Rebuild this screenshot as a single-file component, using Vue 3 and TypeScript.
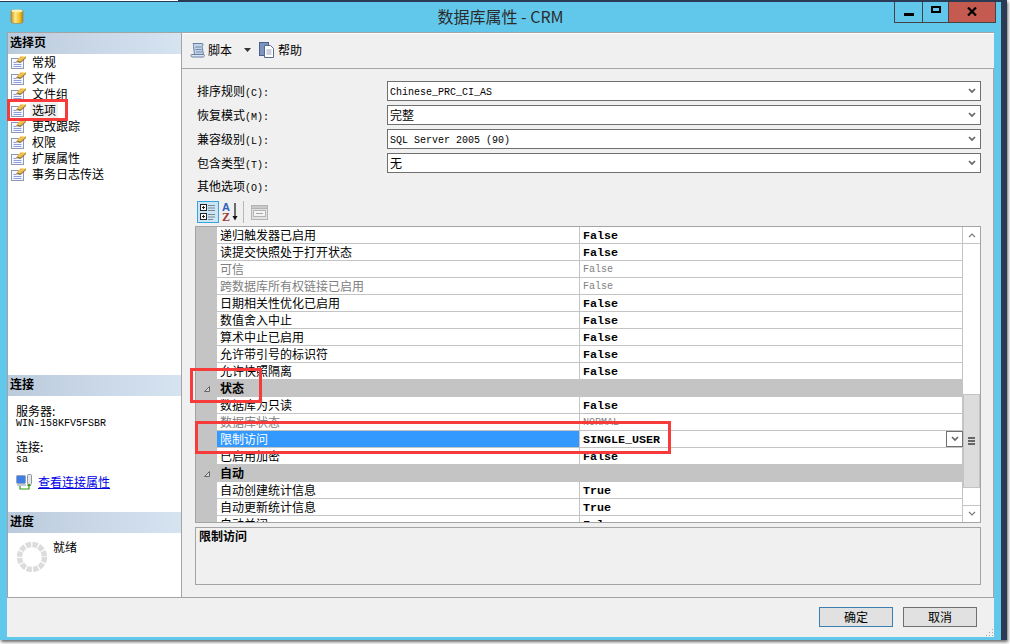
<template>
  <div class="desk">
    <div class="window">
      <div class="topline"><div class="topline-left"></div><div class="topline-right"></div></div>
      <div class="titlebar">
        <svg class="db-icon" width="14" height="17" viewBox="0 0 14 17">
          <defs>
            <linearGradient id="cyl" x1="0" x2="1" y1="0" y2="0">
              <stop offset="0" stop-color="#c98f10" />
              <stop offset="0.35" stop-color="#ffe98a" />
              <stop offset="0.75" stop-color="#f3bb1e" />
              <stop offset="1" stop-color="#b57f10" />
            </linearGradient>
          </defs>
          <path d="M1 3c0-1.5 12-1.5 12 0v11c0 2-12 2-12 0z" fill="url(#cyl)" stroke="#9a8450" stroke-width="0.7" />
          <ellipse cx="7" cy="3" rx="5.5" ry="1.4" fill="#fff3b8" />
        </svg>
        <div class="title">数据库属性 - CRM</div>
        <div class="win-btns">
          <div class="win-btn min"><i></i></div>
          <div class="win-btn max"><i></i></div>
          <div class="win-btn close">
            <svg width="10" height="9" viewBox="0 0 10 9"><path d="M1 .5l8 8M9 .5l-8 8" stroke="#000" stroke-width="2.2" fill="none" /></svg>
          </div>
        </div>
      </div>

      <div class="content">
        <div class="main">
          <aside class="sidebar">
            <div class="side-head">选择页</div>
            <ul class="pages">
              <li v-for="p in pages" :key="p" class="page-row">
                <svg width="16" height="16" viewBox="0 0 16 16">
                  <rect x="0.500" y="4.500" width="12" height="10" fill="#f6f8ff" stroke="#8b97b5" />
                  <path d="M2.500 8.500h3M2.500 10.500h8M2.500 12.500h8" stroke="#8d9ee0" stroke-width="1" />
                  <path d="M5 8l5-5.500h5v1.500L9.500 9z" fill="#8a7440" />
                  <path d="M5.500 6.500L10 2h5v1l-5.500 4.500z" fill="#f0bf4c" />
                  <path d="M10.500 2.600h4" stroke="#fff2b0" stroke-width="0.8" />
                </svg>
                <span :class="{ 'page-sel': p === '选项' }">{{ p }}</span>
              </li>
            </ul>
            <div class="side-fill"></div>
            <div class="side-head">连接</div>
            <div class="conn">
              <div class="zh">服务器:</div>
              <div class="mono server">WIN-158KFV5FSBR</div>
              <div class="zh conn-label">连接:</div>
              <div class="mono server">sa</div>
              <div class="conn-link">
                <svg width="17" height="16" viewBox="0 0 17 16">
                  <rect x="0.500" y="1.500" width="9" height="8" rx="1" fill="#3e7ee8" stroke="#9aa3b5" />
                  <rect x="1" y="10" width="9" height="2" fill="#c3c8d2" />
                  <rect x="11.500" y="0.500" width="4" height="10" rx="1" fill="#e4e6ea" stroke="#8f95a2" />
                  <path d="M4 12v3h9v-4" fill="none" stroke="#2f9a12" stroke-width="1.2" />
                  <path d="M10.800 12l2.200-2.500 2.200 2.500z" fill="#2f9a12" />
                </svg>
                <a class="link">查看连接属性</a>
              </div>
            </div>
            <div class="side-head">进度</div>
            <div class="progress">
              <svg width="30" height="30" viewBox="0 0 30 30">
                <circle cx="15" cy="15" r="12.5" fill="none" stroke="#dcdcdc" stroke-width="5.4" stroke-dasharray="5.3 1.25" />
              </svg>
              <span class="zh">就绪</span>
            </div>
          </aside>

          <section class="panel">
            <div class="toolbar">
              <svg width="16" height="16" viewBox="0 0 16 16">
                <path d="M3 1.500H12c1.500 0 1.500 2 0 2.500l1.500 8.500H4.500L3.500 4.500C3.500 3 3.500 2 3 1.500z" fill="#c3d4ea" stroke="#5c7696" stroke-width="0.9" />
                <path d="M1.500 12.500h12c1.500 0 1 2.500-.5 2.500H2.500C.5 15 .5 12.500 1.500 12.500z" fill="#dbe6f4" stroke="#5c7696" stroke-width="0.9" />
                <path d="M5 5h6M5.500 7.500h6M6 10h6" stroke="#5c7696" stroke-width="0.8" />
              </svg>
              <span class="tool-text">脚本</span>
              <svg class="tool-arrow" width="7" height="4" viewBox="0 0 7 4"><path d="M0 0h7L3.500 4z" fill="#333" /></svg>
              <svg width="16" height="16" viewBox="0 0 16 16">
                <rect x="0.500" y="0.500" width="9" height="13" fill="#7d93c0" stroke="#4a5f8c" />
                <path d="M5.500 3.500h6l3 3v9h-9z" fill="#fff" stroke="#596a8c" />
                <path d="M7.500 8h5M7.500 10h5M7.500 12h5" stroke="#8e9ab5" stroke-width="0.9" />
              </svg>
              <span class="tool-text help-text">帮助</span>
            </div>

            <div class="form">
              <div v-for="f in fields" :key="f.zh" class="field">
                <label class="field-label">
                  <span class="zh">{{ f.zh }}</span><span class="mono">{{ f.key }}</span>
                </label>
                <div class="select">
                  <span :class="f.mono ? 'mono' : 'zh'">{{ f.value }}</span>
                  <svg width="8" height="6" viewBox="0 0 8 6"><path d="M1 1l3 3 3-3" fill="none" stroke="#666" stroke-width="1.700" /></svg>
                </div>
              </div>
              <div class="other"><span class="zh">其他选项</span><span class="mono">(O):</span></div>

              <div class="grid-tools">
                <div class="grid-tool active">
                  <svg width="18" height="18" viewBox="0 0 18 18">
                    <rect x="1.500" y="1.500" width="6" height="6" fill="#fff" stroke="#222" />
                    <path d="M3 4.500h3M4.500 3v3" stroke="#222" />
                    <rect x="1.500" y="10.500" width="6" height="6" fill="#fff" stroke="#222" />
                    <path d="M3 13.500h3M4.500 12v3" stroke="#222" />
                    <path d="M9 2.500h7M9 5h7M9 7.500h7M9 11.500h7M9 14h7M9 16.500h5" stroke="#7d8794" />
                  </svg>
                </div>
                <div class="grid-tool az">
                  <svg width="17" height="20" viewBox="0 0 17 20">
                    <text x="0" y="9" class="az-a">A</text>
                    <text x="0" y="19" class="az-z">Z</text>
                    <path d="M13 1v15" stroke="#111" stroke-width="1.200" />
                    <path d="M10.500 14h5L13 18.500z" fill="#111" />
                  </svg>
                </div>
                <div class="tool-sep"></div>
                <div class="grid-tool">
                  <svg width="17" height="16" viewBox="0 0 17 16">
                    <rect x="0.500" y="1.500" width="16" height="14" fill="#e2e2e2" stroke="#b4b4b4" />
                    <rect x="0.500" y="1.500" width="16" height="3" fill="#c9c9c9" stroke="#b4b4b4" />
                    <rect x="2.500" y="6.500" width="12" height="6" fill="#f4f4f4" stroke="#b4b4b4" />
                    <path d="M5 9.500h7" stroke="#a8a8a8" />
                  </svg>
                </div>
              </div>

              <div class="grid">
                <div class="rows">
                  <div v-for="r in rows" :key="r.name" class="row" :class="r.kind">
                    <div class="gutter">
                      <svg v-if="r.kind === 'cat'" width="6" height="6" viewBox="0 0 6 6"><path d="M5.500 .5v5H.5z" fill="#d8d8d8" stroke="#666" /></svg>
                    </div>
                    <div class="name">{{ r.name }}</div>
                    <div v-if="r.kind !== 'cat'" class="value">
                      <span>{{ r.value }}</span>
                      <div v-if="r.kind === 'sel'" class="drop">
                        <svg width="8" height="6" viewBox="0 0 8 6"><path d="M1 1l3 3 3-3" fill="none" stroke="#666" stroke-width="1.700" /></svg>
                      </div>
                    </div>
                  </div>
                </div>
                <div class="scrollbar">
                  <div class="sb-btn">
                    <svg width="8" height="5" viewBox="0 0 8 5"><path d="M1 4l3-3 3 3" fill="none" stroke="#777" stroke-width="1.100" /></svg>
                  </div>
                  <div class="sb-thumb"><i></i><i></i><i></i></div>
                  <div class="sb-btn down">
                    <svg width="8" height="5" viewBox="0 0 8 5"><path d="M1 1l3 3 3-3" fill="none" stroke="#777" stroke-width="1.100" /></svg>
                  </div>
                </div>
              </div>

              <div class="desc"><b class="zh">限制访问</b></div>
            </div>
          </section>
        </div>

        <div class="footer">
          <button class="btn primary">确定</button>
          <button class="btn">取消</button>
          <svg class="grip" width="9" height="9" viewBox="0 0 9 9">
            <path d="M7 1h1v1H7zM4 4h1v1H4zM7 4h1v1H7zM1 7h1v1H1zM4 7h1v1H4zM7 7h1v1H7z" fill="#a8a8a8" />
          </svg>
        </div>
      </div>
    </div>

    <!-- 红色标注框 -->
    <div class="mark mark-page"></div>
    <div class="mark mark-cat"></div>
    <div class="mark mark-row"></div>
  </div>
</template>

<script setup lang="ts">
type RowKind = "normal" | "gray" | "cat" | "sel";

interface Row {
  name: string;
  value: string;
  kind: RowKind;
}

const pages = ["常规", "文件", "文件组", "选项", "更改跟踪", "权限", "扩展属性", "事务日志传送"];

const fields = [
  { zh: "排序规则", key: "(C):", value: "Chinese_PRC_CI_AS", mono: true },
  { zh: "恢复模式", key: "(M):", value: "完整", mono: false },
  { zh: "兼容级别", key: "(L):", value: "SQL Server 2005 (90)", mono: true },
  { zh: "包含类型", key: "(T):", value: "无", mono: false },
];

const rows: Row[] = [
  { name: "递归触发器已启用", value: "False", kind: "normal" },
  { name: "读提交快照处于打开状态", value: "False", kind: "normal" },
  { name: "可信", value: "False", kind: "gray" },
  { name: "跨数据库所有权链接已启用", value: "False", kind: "gray" },
  { name: "日期相关性优化已启用", value: "False", kind: "normal" },
  { name: "数值舍入中止", value: "False", kind: "normal" },
  { name: "算术中止已启用", value: "False", kind: "normal" },
  { name: "允许带引号的标识符", value: "False", kind: "normal" },
  { name: "允许快照隔离", value: "False", kind: "normal" },
  { name: "状态", value: "", kind: "cat" },
  { name: "数据库为只读", value: "False", kind: "normal" },
  { name: "数据库状态", value: "NORMAL", kind: "gray" },
  { name: "限制访问", value: "SINGLE_USER", kind: "sel" },
  { name: "已启用加密", value: "False", kind: "normal" },
  { name: "自动", value: "", kind: "cat" },
  { name: "自动创建统计信息", value: "True", kind: "normal" },
  { name: "自动更新统计信息", value: "True", kind: "normal" },
  { name: "自动关闭", value: "False", kind: "normal" },
];
</script>

<style>
html,
body {
  margin: 0;
  background: #fff;
}
</style>

<style scoped>
.desk {
  position: relative;
  width: 1010px;
  height: 644px;
  overflow: hidden;
  background: #fff;
  font-family: "Noto Sans CJK SC", "Liberation Sans", sans-serif;
  font-size: 12px;
  color: #000;
}

.zh {
  font-family: "Noto Sans CJK SC", sans-serif;
  font-size: 12px;
}

.mono {
  font-family: "Liberation Mono", "Noto Sans CJK SC", monospace;
  font-size: 10px;
}

.window {
  display: flex;
  flex-direction: column;
  box-sizing: border-box;
  width: 1007px;
  height: 640px;
  background: #62c8eb;
  border-right: 6px solid #2b3a55;
  box-shadow: 1px 2px 3px rgba(0, 0, 0, 0.6);
}

.topline {
  display: flex;
  height: 2px;
  flex: none;
}

.topline-left {
  width: 178px;
  background: #fff;
  border-bottom: 1px solid #2b3a55;
  box-sizing: border-box;
}

.topline-right {
  flex: 1;
  background: #2b3a55;
}

.titlebar {
  display: grid;
  grid-template-columns: 1fr auto 1fr;
  align-items: start;
  height: 30px;
  flex: none;
}

.db-icon {
  margin: 6px 0 0 10px;
}

.title {
  margin-top: 5px;
  font-size: 16px;
  line-height: 18px;
  color: #2b2b2b;
}

.win-btns {
  display: flex;
  justify-self: end;
  margin-right: 5px;
  height: 21px;
  border: 1px solid #444;
  border-top: 0;
  box-sizing: border-box;
}

.win-btn {
  display: flex;
  align-items: center;
  justify-content: center;
  box-sizing: border-box;
  border-right: 1px solid #444;
}

.win-btn.min {
  width: 28px;
}

.win-btn.min i {
  width: 10px;
  height: 3px;
  margin-top: 5px;
  background: #000;
}

.win-btn.max {
  width: 26px;
}

.win-btn.max i {
  width: 10px;
  height: 7px;
  margin-top: -5px;
  box-sizing: border-box;
  border: 2px solid #000;
}

.win-btn.close {
  width: 46px;
  background: #c45a50;
  border-right: 0;
}

.win-btn.close svg {
  margin-top: -2px;
}

.content {
  display: flex;
  flex-direction: column;
  flex: 1;
  margin: 0 7px 3px;
  background: #f0f0f0;
  border-top: 1px solid #a4a4a4;
  min-height: 0;
}

.main {
  display: flex;
  height: 564px;
  flex: none;
}

.sidebar {
  display: flex;
  flex-direction: column;
  box-sizing: border-box;
  width: 175px;
  background: #fff;
  border-left: 1px solid #a4a4a4;
  border-right: 1px solid #a4a4a4;
}

.side-head {
  flex: none;
  height: 21px;
  padding-left: 2px;
  line-height: 18px;
  font-weight: 700;
  font-size: 12px;
  background: linear-gradient(90deg, #bccbdc, #d6e3f1);
}

.pages {
  margin: 0;
  padding: 0;
  list-style: none;
}

.page-row {
  display: flex;
  align-items: center;
  gap: 5px;
  height: 16px;
  padding-left: 3px;
  line-height: 16px;
}

.page-row svg {
  flex: none;
}

.page-sel {
  margin-left: -2px;
  padding: 0 2px;
  background: #f0f0f0;
}

.side-fill {
  flex: 1;
}

.conn {
  height: 116px;
  flex: none;
  padding: 8px 0 0 8px;
  box-sizing: border-box;
}

.conn .zh {
  line-height: 14px;
}

.conn .server {
  line-height: 11px;
}

.conn-label {
  margin-top: 11px;
}

.conn-link {
  display: flex;
  align-items: center;
  gap: 5px;
  margin-top: 9px;
}

.link {
  color: #0000e6;
  text-decoration: underline;
  line-height: 16px;
}

.progress {
  display: flex;
  align-items: flex-start;
  gap: 6px;
  flex: none;
  height: 64px;
  padding: 9px 0 0 9px;
  box-sizing: border-box;
}

.progress .zh {
  margin-top: -2px;
  line-height: 14px;
}

.panel {
  display: flex;
  flex-direction: column;
  flex: 1;
  min-width: 0;
  border-top: 1px solid #fff;
  box-sizing: border-box;
}

.toolbar {
  display: flex;
  align-items: center;
  flex: none;
  box-sizing: border-box;
  height: 35px;
  padding: 0 0 3px 8px;
  border-bottom: 1px solid #a6a6ac;
}

.tool-text {
  margin-left: 2px;
}

.help-text {
  margin-left: 3px;
}

.tool-arrow {
  margin: 0 8px 0 12px;
}

.form {
  flex: 1;
  box-sizing: border-box;
  padding: 12px 12px 0 13px;
  border-right: 1px solid #a6a6ac;
  min-height: 0;
}

.field {
  display: flex;
  align-items: center;
  height: 20px;
  margin-bottom: 4px;
  padding-left: 2px;
}

.field-label {
  width: 190px;
  flex: none;
  margin-top: -2px;
}

.select {
  display: flex;
  align-items: center;
  justify-content: space-between;
  flex: 1;
  box-sizing: border-box;
  height: 20px;
  padding: 0 4px 0 2px;
  background: #fff;
  border: 1px solid #707070;
}

.select .mono {
  margin-top: 2px;
}

.select .zh {
  margin-top: -2px;
}

.other {
  height: 14px;
  margin-top: 6px;
  padding-left: 2px;
  line-height: 14px;
}

.grid-tools {
  display: flex;
  align-items: center;
  gap: 2px;
  height: 22px;
  margin: 8px 0 3px;
  padding-left: 2px;
}

.grid-tool {
  display: flex;
  align-items: center;
  justify-content: center;
  box-sizing: border-box;
  width: 22px;
  height: 22px;
}

.grid-tool.active {
  background: #c9e6f7;
  border: 1px solid #3aa3dc;
}

.grid-tool.az {
  width: 18px;
}

.az-a {
  font-family: "Liberation Sans", sans-serif;
  font-size: 11px;
  font-weight: 700;
  fill: #2f5fbf;
}

.az-z {
  font-family: "Liberation Serif", serif;
  font-size: 12px;
  font-weight: 700;
  fill: #a03a3a;
}

.tool-sep {
  width: 1px;
  height: 22px;
  background: #b8b8b8;
  margin: 0 2px;
}

.grid {
  display: flex;
  box-sizing: border-box;
  height: 297px;
  background: #fff;
  border: 1px solid #a4a4a4;
}

.rows {
  flex: 1;
  min-width: 0;
  overflow: hidden;
}

.row {
  display: flex;
  box-sizing: border-box;
  height: 17px;
  line-height: 16px;
}

.gutter {
  display: flex;
  align-items: center;
  justify-content: center;
  width: 21px;
  flex: none;
  background: #c4c4c4;
}

.name {
  box-sizing: border-box;
  width: 362px;
  flex: none;
  padding-left: 3px;
  border-bottom: 1px solid #c4c4c4;
}

.value {
  display: flex;
  align-items: flex-start;
  flex: 1;
  min-width: 0;
  padding-left: 3px;
  border-left: 1px solid #c4c4c4;
  border-right: 1px solid #c4c4c4;
  border-bottom: 1px solid #c4c4c4;
  font-family: "Liberation Mono", monospace;
  font-size: 11.67px;
  font-weight: 700;
  line-height: 18px;
}

.row.gray .name {
  color: #808080;
}

.row.gray .value {
  color: #808080;
  font-size: 10px;
  font-weight: 400;
}

.row.cat {
  background: #c4c4c4;
}

.row.cat .name {
  width: auto;
  border-bottom: 0;
  font-weight: 700;
}

.row.sel .name {
  background: #3399ff;
  color: #fff;
}

.drop {
  display: flex;
  align-items: center;
  justify-content: center;
  box-sizing: border-box;
  width: 17px;
  height: 16px;
  margin-left: auto;
  margin-right: -1px;
  background: #fff;
  border: 1px solid #707070;
}

.scrollbar {
  display: flex;
  flex-direction: column;
  width: 17px;
  flex: none;
}

.sb-btn {
  display: flex;
  align-items: center;
  justify-content: center;
  flex: none;
  box-sizing: border-box;
  height: 17px;
  border-bottom: 1px solid #c4c4c4;
}

.sb-btn.down {
  height: 16px;
  border-bottom: 0;
  border-top: 1px solid #c4c4c4;
}

.sb-thumb {
  display: flex;
  flex-direction: column;
  align-items: center;
  justify-content: center;
  gap: 1px;
  flex: none;
  box-sizing: border-box;
  height: 94px;
  margin: 150px 0 17px;
  background: #dcdcdc;
  border: 1px solid #c4c4c4;
}

.sb-thumb i {
  width: 7px;
  height: 2px;
  background: #666;
}

.desc {
  box-sizing: border-box;
  height: 58px;
  margin-top: 4px;
  padding: 0 3px;
  border: 1px solid #a4a4a4;
  line-height: 16px;
}

.footer {
  position: relative;
  display: flex;
  justify-content: flex-end;
  align-items: flex-start;
  gap: 10px;
  flex: 1;
  box-sizing: border-box;
  padding: 9px 17px 0 0;
  border-top: 1px solid #a4a4a4;
}

.btn {
  width: 74px;
  height: 20px;
  padding: 0;
  background: #e1e1e1;
  border: 1px solid #707070;
  font-family: "Noto Sans CJK SC", sans-serif;
  font-size: 12px;
  line-height: 16px;
  color: #000;
}

.btn.primary {
  border-color: #3c7fb1;
}

.grip {
  position: absolute;
  right: 0;
  bottom: 0;
}

.mark {
  position: absolute;
  box-sizing: border-box;
  border: 3px solid #f73b3b;
  pointer-events: none;
}

.mark-page {
  left: 7px;
  top: 99px;
  width: 61px;
  height: 22px;
}

.mark-cat {
  left: 190px;
  top: 368px;
  width: 72px;
  height: 35px;
}

.mark-row {
  left: 195px;
  top: 421px;
  width: 476px;
  height: 33px;
}
</style>
